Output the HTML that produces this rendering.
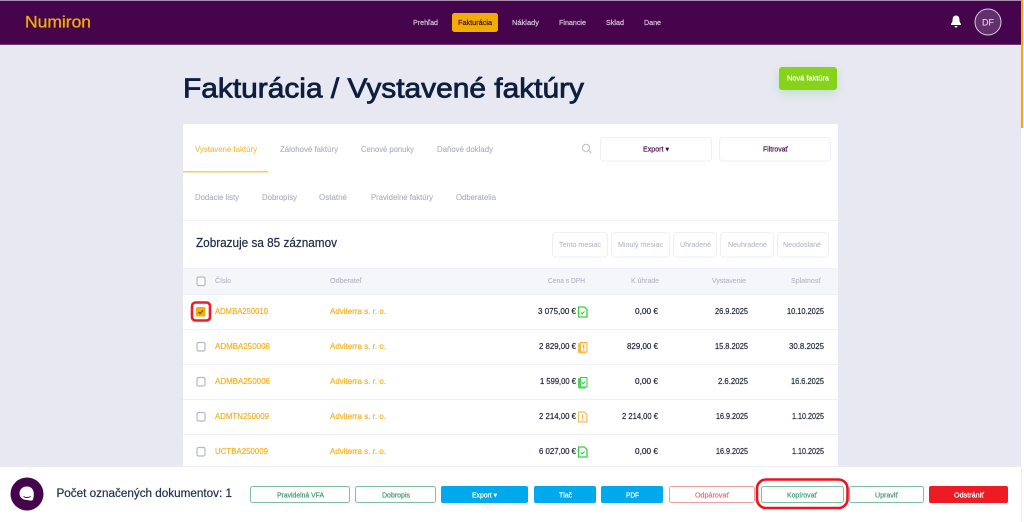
<!DOCTYPE html>
<html lang="sk"><head><meta charset="utf-8"><title>Numiron</title>
<style>
html,body{margin:0;padding:0;width:1024px;height:522px;overflow:hidden;background:#e8e8f2}
svg{display:block;position:absolute;left:0;top:0;filter:blur(.3px)}
text{font-family:"Liberation Sans",sans-serif;font-size:8px}
.nav{fill:#d6c6da;font-size:7.5px;stroke:#d6c6da;stroke-width:.2}
.tab{fill:#a9acbc;font-size:8px;stroke:#a9acbc;stroke-width:.08}
.chip{fill:#b4b7c5;font-size:7.5px;stroke:#b4b7c5;stroke-width:.08}
.th{fill:#b0b3c2;font-size:7.5px;stroke:#b0b3c2;stroke-width:.08}
.lnk{fill:#f4b52a;font-size:8.5px;stroke:#f4b52a;stroke-width:.25}
.num{fill:#1d2536;font-size:8.5px;stroke:#1d2536;stroke-width:.2}
.grn{fill:#3e9a6e;font-size:7.5px;stroke:#3e9a6e;stroke-width:.2}
.wht{fill:#fff;font-size:7.5px;stroke:#fff;stroke-width:.2}
.pur{fill:#45044c;font-size:7.5px;stroke:#45044c;stroke-width:.2}
.sep{stroke:#eef0f5;stroke-width:1}
.cb{fill:#fff;stroke:#b5b8ca;stroke-width:1.2}
</style></head><body>
<svg width="1024" height="522" viewBox="0 0 1024 522" xmlns="http://www.w3.org/2000/svg">
<defs><filter id="s" x="-40%" y="-60%" width="180%" height="240%"><feGaussianBlur stdDeviation="5"/></filter></defs>
<rect width="1024" height="522" fill="#e8e8f2"/>
<!-- scrollbar -->
<rect x="1021" y="0" width="3" height="522" fill="#fff"/>
<rect x="1021" y="0" width="2" height="128" fill="#f2ae00"/>
<!-- header -->
<rect x="0" y="0" width="1021" height="45" fill="#45044c"/>
<rect x="0" y="0" width="1021" height="1" fill="#a78fac"/>
<rect x="0" y="44" width="1021" height="1" fill="#6d3a75"/>
<text x="25" y="27.5" textLength="66" lengthAdjust="spacingAndGlyphs" style="font-size:16.5px;fill:#f2ae00;stroke:#f2ae00;stroke-width:.3">Numiron</text>
<text class="nav" x="413" y="25" textLength="25" lengthAdjust="spacingAndGlyphs">Prehľad</text>
<rect x="452" y="13" width="46" height="19" rx="2.5" fill="#f2ae00"/>
<text class="pur" x="458" y="25" textLength="34" lengthAdjust="spacingAndGlyphs">Fakturácia</text>
<text class="nav" x="512" y="25" textLength="27" lengthAdjust="spacingAndGlyphs">Náklady</text>
<text class="nav" x="559" y="25" textLength="27" lengthAdjust="spacingAndGlyphs">Financie</text>
<text class="nav" x="606" y="25" textLength="18" lengthAdjust="spacingAndGlyphs">Sklad</text>
<text class="nav" x="644" y="25" textLength="17" lengthAdjust="spacingAndGlyphs">Dane</text>
<path d="M956 15.500c-2.400 0-3.400 1.900-3.400 4 0 2.300-.8 3.300-1.600 4.500v1h10v-1c-.8-1.200-1.600-2.200-1.600-4.500 0-2.100-1-4-3.400-4z" fill="#fff"/>
<path d="M954.500 26h3a1.500 1.500 0 0 1-3 0z" fill="#fff"/>
<circle cx="988" cy="22" r="13" fill="#63306e" stroke="#d8cfdc" stroke-width="1"/>
<text x="982" y="25.500" textLength="12" lengthAdjust="spacingAndGlyphs" style="font-size:9.500px;fill:#f0e8f2">DF</text>
<!-- title -->
<text x="183" y="97.500" textLength="401" lengthAdjust="spacingAndGlyphs" style="font-size:28px;fill:#0e1f3d;stroke:#0e1f3d;stroke-width:.8">Fakturácia / Vystavené faktúry</text>
<rect x="779" y="71" width="58" height="23" rx="3" fill="#8fd9a0" opacity=".45" filter="url(#s)"/>
<rect x="779" y="67" width="58" height="23" rx="3" fill="#86d31a"/>
<text class="wht" x="787" y="80.500" textLength="42" lengthAdjust="spacingAndGlyphs">Nová faktúra</text>
<!-- card -->
<rect x="183" y="124" width="655" height="345" rx="2" fill="#fff"/>
<text class="tab" x="195" y="152" textLength="62" lengthAdjust="spacingAndGlyphs" style="fill:#f3b93a;stroke:#f3b93a">Vystavené faktúry</text>
<text class="tab" x="280" y="152" textLength="58" lengthAdjust="spacingAndGlyphs">Zálohové faktúry</text>
<text class="tab" x="361" y="152" textLength="53" lengthAdjust="spacingAndGlyphs">Cenové ponuky</text>
<text class="tab" x="437" y="152" textLength="56" lengthAdjust="spacingAndGlyphs">Daňové doklady</text>
<rect x="183" y="171" width="85" height="1.500" fill="#f6cd62"/>
<circle cx="586" cy="147.800" r="3.600" fill="none" stroke="#b4b6c2" stroke-width=".9"/>
<path d="M588.700 150.500l2.600 2.800" stroke="#b4b6c2" stroke-width=".9" fill="none"/>
<rect x="600.500" y="137.500" width="111" height="23.500" rx="3.500" fill="#fff" stroke="#eff0f5"/>
<text class="pur" x="643" y="151.500" textLength="26" lengthAdjust="spacingAndGlyphs">Export ▾</text>
<rect x="719.500" y="137.500" width="111" height="23.500" rx="3.500" fill="#fff" stroke="#eff0f5"/>
<text class="pur" x="763" y="151.500" textLength="25" lengthAdjust="spacingAndGlyphs">Filtrovať</text>
<text class="tab" x="195" y="200" textLength="44" lengthAdjust="spacingAndGlyphs">Dodacie listy</text>
<text class="tab" x="262" y="200" textLength="35" lengthAdjust="spacingAndGlyphs">Dobropisy</text>
<text class="tab" x="319" y="200" textLength="28" lengthAdjust="spacingAndGlyphs">Ostatné</text>
<text class="tab" x="371" y="200" textLength="62" lengthAdjust="spacingAndGlyphs">Pravidelné faktúry</text>
<text class="tab" x="456" y="200" textLength="40" lengthAdjust="spacingAndGlyphs">Odberatelia</text>
<path class="sep" d="M183 220.500H838"/>
<text x="196" y="247" textLength="141" lengthAdjust="spacingAndGlyphs" style="font-size:12.500px;fill:#1d2a45;stroke:#1d2a45;stroke-width:.2">Zobrazuje sa 85 záznamov</text>
<g fill="#fff" stroke="#eff0f5">
<rect x="552.500" y="232.500" width="55" height="24.500" rx="3.500"/>
<rect x="611.500" y="232.500" width="58" height="24.500" rx="3.500"/>
<rect x="673.500" y="232.500" width="43" height="24.500" rx="3.500"/>
<rect x="720.500" y="232.500" width="53" height="24.500" rx="3.500"/>
<rect x="777.500" y="232.500" width="51" height="24.500" rx="3.500"/>
</g>
<text class="chip" x="559" y="247" textLength="42" lengthAdjust="spacingAndGlyphs">Tento mesiac</text>
<text class="chip" x="618" y="247" textLength="45" lengthAdjust="spacingAndGlyphs">Minulý mesiac</text>
<text class="chip" x="680" y="247" textLength="31" lengthAdjust="spacingAndGlyphs">Uhradené</text>
<text class="chip" x="728" y="247" textLength="39" lengthAdjust="spacingAndGlyphs">Neuhradené</text>
<text class="chip" x="783" y="247" textLength="38" lengthAdjust="spacingAndGlyphs">Neodoslané</text>
<!-- table head -->
<rect x="183" y="268" width="655" height="26" fill="#f5f6f9"/>
<path class="sep" d="M183 268.500H838M183 294.500H838M183 329.500H838M183 364.500H838M183 399.500H838M183 434.500H838"/>
<rect x="197" y="277" width="8" height="8.500" rx="1.500" class="cb"/>
<text class="th" x="215" y="283" textLength="16" lengthAdjust="spacingAndGlyphs">Číslo</text>
<text class="th" x="330" y="283" textLength="32" lengthAdjust="spacingAndGlyphs">Odberateľ</text>
<text class="th" x="548" y="283" textLength="37" lengthAdjust="spacingAndGlyphs">Cena s DPH</text>
<text class="th" x="631" y="283" textLength="28" lengthAdjust="spacingAndGlyphs">K úhrade</text>
<text class="th" x="712" y="283" textLength="34" lengthAdjust="spacingAndGlyphs">Vystavenie</text>
<text class="th" x="791" y="283" textLength="30" lengthAdjust="spacingAndGlyphs">Splatnosť</text>
<!-- row 1 -->
<rect x="196" y="307" width="9.500" height="9.500" rx="1.500" fill="#f2ae0d"/>
<path d="M198.500 312l1.500 1.500 3-3" fill="none" stroke="#6b4a10" stroke-width="1"/>
<rect x="192" y="302.500" width="18" height="18" rx="3.500" fill="none" stroke="#ee1c25" stroke-width="2.600"/>
<text class="lnk" x="215" y="314" textLength="53" lengthAdjust="spacingAndGlyphs">ADMBA250010</text>
<text class="lnk" x="330" y="314" textLength="56" lengthAdjust="spacingAndGlyphs">Adviterra s. r. o.</text>
<text class="num" x="538" y="314" textLength="38" lengthAdjust="spacingAndGlyphs">3 075,00 €</text>
<path d="M578.500 307h6l2.500 2.500v7.500h-8.500z" fill="#effbf0" stroke="#3ecf4a" stroke-width="1.300"/><path d="M581 312.500l1.300 1.300 2.200-2.300" fill="none" stroke="#3a9a4a" stroke-width=".8"/>
<text class="num" x="635" y="314" textLength="23" lengthAdjust="spacingAndGlyphs">0,00 €</text>
<text class="num" x="715" y="314" textLength="33" lengthAdjust="spacingAndGlyphs">26.9.2025</text>
<text class="num" x="787" y="314" textLength="37" lengthAdjust="spacingAndGlyphs">10.10.2025</text>
<!-- row 2 -->
<rect x="197" y="342.500" width="8" height="8.500" rx="1.500" class="cb"/>
<text class="lnk" x="215" y="349" textLength="55" lengthAdjust="spacingAndGlyphs">ADMBA250008</text>
<text class="lnk" x="330" y="349" textLength="56" lengthAdjust="spacingAndGlyphs">Adviterra s. r. o.</text>
<text class="num" x="539" y="349" textLength="37" lengthAdjust="spacingAndGlyphs">2 829,00 €</text>
<rect x="578" y="343" width="8" height="10.500" rx="1.500" fill="#f6bd58"/>
<path d="M580.500 342.500h6.500v9.500h-6.500z" fill="#fff4dc" stroke="#f4b63f" stroke-width="1"/><path d="M583.700 344.500v4M583.700 349.500v1" stroke="#d99a20" stroke-width=".9"/>
<text class="num" x="627" y="349" textLength="31" lengthAdjust="spacingAndGlyphs">829,00 €</text>
<text class="num" x="715" y="349" textLength="33" lengthAdjust="spacingAndGlyphs">15.8.2025</text>
<text class="num" x="789" y="349" textLength="35" lengthAdjust="spacingAndGlyphs">30.8.2025</text>
<!-- row 3 -->
<rect x="197" y="377.500" width="8" height="8.500" rx="1.500" class="cb"/>
<text class="lnk" x="215" y="384" textLength="55" lengthAdjust="spacingAndGlyphs">ADMBA250006</text>
<text class="lnk" x="330" y="384" textLength="56" lengthAdjust="spacingAndGlyphs">Adviterra s. r. o.</text>
<text class="num" x="540" y="384" textLength="36" lengthAdjust="spacingAndGlyphs">1 599,00 €</text>
<rect x="578" y="378" width="8" height="10.500" rx="1.500" fill="#4fd45a"/>
<path d="M580.500 377.500h6.500v9.500h-6.500z" fill="#eefbef" stroke="#3ecf4a" stroke-width="1"/><path d="M582 382.500l1.200 1.200 2-2.200" fill="none" stroke="#3a9a4a" stroke-width=".8"/>
<text class="num" x="635" y="384" textLength="23" lengthAdjust="spacingAndGlyphs">0,00 €</text>
<text class="num" x="718" y="384" textLength="30" lengthAdjust="spacingAndGlyphs">2.6.2025</text>
<text class="num" x="791" y="384" textLength="33" lengthAdjust="spacingAndGlyphs">16.6.2025</text>
<!-- row 4 -->
<rect x="197" y="412.500" width="8" height="8.500" rx="1.500" class="cb"/>
<text class="lnk" x="215" y="419" textLength="54" lengthAdjust="spacingAndGlyphs">ADMTN250009</text>
<text class="lnk" x="330" y="419" textLength="56" lengthAdjust="spacingAndGlyphs">Adviterra s. r. o.</text>
<text class="num" x="539" y="419" textLength="37" lengthAdjust="spacingAndGlyphs">2 214,00 €</text>
<path d="M578.500 412h6l2.500 2.500v7.500h-8.500z" fill="#fff8ea" stroke="#f4c068" stroke-width="1.300"/><path d="M582.700 414.500v4M582.700 419.500v1" stroke="#e0a030" stroke-width=".8"/>
<text class="num" x="622" y="419" textLength="36" lengthAdjust="spacingAndGlyphs">2 214,00 €</text>
<text class="num" x="716" y="419" textLength="32" lengthAdjust="spacingAndGlyphs">16.9.2025</text>
<text class="num" x="792" y="419" textLength="32" lengthAdjust="spacingAndGlyphs">1.10.2025</text>
<!-- row 5 -->
<rect x="197" y="447.500" width="8" height="8.500" rx="1.500" class="cb"/>
<text class="lnk" x="215" y="454" textLength="53" lengthAdjust="spacingAndGlyphs">UCTBA250009</text>
<text class="lnk" x="330" y="454" textLength="56" lengthAdjust="spacingAndGlyphs">Adviterra s. r. o.</text>
<text class="num" x="539" y="454" textLength="37" lengthAdjust="spacingAndGlyphs">6 027,00 €</text>
<path d="M578.500 447h6l2.500 2.500v7.500h-8.500z" fill="#effbf0" stroke="#3ecf4a" stroke-width="1.300"/><path d="M581 452.500l1.300 1.300 2.200-2.300" fill="none" stroke="#3a9a4a" stroke-width=".8"/>
<text class="num" x="635" y="454" textLength="23" lengthAdjust="spacingAndGlyphs">0,00 €</text>
<text class="num" x="716" y="454" textLength="32" lengthAdjust="spacingAndGlyphs">16.9.2025</text>
<text class="num" x="792" y="454" textLength="32" lengthAdjust="spacingAndGlyphs">1.10.2025</text>
<!-- bottom bar -->
<rect x="0" y="466" width="1024" height="56" fill="#fff"/>
<rect x="183" y="466" width="655" height="1" fill="#eef0f5"/>
<rect x="0" y="465" width="183" height="2" fill="#ecebf5"/>
<rect x="838" y="465" width="183" height="2" fill="#ecebf5"/>
<rect x="1021" y="466" width="1" height="56" fill="#ececf2"/>
<circle cx="27" cy="494" r="16.500" fill="#45044c"/>
<path d="M27 486.500c-4.500 0-7.500 3-7.500 6.800 0 4 3 6.700 7.500 6.700 1.500 0 4.500 1.200 5.500.3 1-1 1.300-4 1.300-7 0-3.800-2.800-6.800-6.800-6.800z" fill="#fff"/>
<path d="M23.500 496.500c2 1.400 5 1.400 7 0" fill="none" stroke="#45044c" stroke-width="1"/>
<text x="56.500" y="497" textLength="175.500" lengthAdjust="spacingAndGlyphs" style="font-size:11.500px;fill:#23304d;stroke:#23304d;stroke-width:.2">Počet označených dokumentov: 1</text>
<rect x="250.500" y="486.500" width="99" height="16" rx="2" fill="#fff" stroke="#7fc0a3"/>
<text class="grn" x="277" y="497.500" textLength="47" lengthAdjust="spacingAndGlyphs">Pravidelná VFA</text>
<rect x="355.500" y="486.500" width="80" height="16" rx="2" fill="#fff" stroke="#7fc0a3"/>
<text class="grn" x="382" y="497.500" textLength="28" lengthAdjust="spacingAndGlyphs">Dobropis</text>
<rect x="441" y="486" width="87" height="17" rx="2" fill="#00a8ec"/>
<text class="wht" x="472" y="497.500" textLength="25" lengthAdjust="spacingAndGlyphs">Export ▾</text>
<rect x="534" y="486" width="62" height="17" rx="2" fill="#00a8ec"/>
<text class="wht" x="559" y="497.500" textLength="13" lengthAdjust="spacingAndGlyphs">Tlač</text>
<rect x="601" y="486" width="62" height="17" rx="2" fill="#00a8ec"/>
<text class="wht" x="626" y="497.500" textLength="13" lengthAdjust="spacingAndGlyphs">PDF</text>
<rect x="669.500" y="486.500" width="85" height="16" rx="2" fill="#fff" stroke="#f3a0a5"/>
<text x="695" y="497.500" textLength="34" lengthAdjust="spacingAndGlyphs" style="font-size:7.500px;fill:#ee6b73;stroke:#ee6b73;stroke-width:.2">Odpárovať</text>
<rect x="761.500" y="486.500" width="82" height="16" rx="2" fill="#fff" stroke="#7fc0a3"/>
<text class="grn" x="787" y="497.500" textLength="30" lengthAdjust="spacingAndGlyphs">Kopírovať</text>
<rect x="849.500" y="486.500" width="74" height="16" rx="2" fill="#fff" stroke="#7fc0a3"/>
<text class="grn" x="875" y="497.500" textLength="23" lengthAdjust="spacingAndGlyphs">Upraviť</text>
<rect x="929" y="486" width="79" height="17" rx="2" fill="#ed1c24"/>
<text class="wht" x="954" y="497.500" textLength="30" lengthAdjust="spacingAndGlyphs">Odstrániť</text>
<rect x="757" y="479.500" width="90.500" height="28.500" rx="9" fill="none" stroke="#e8141f" stroke-width="2.600"/>
</svg>
</body></html>
